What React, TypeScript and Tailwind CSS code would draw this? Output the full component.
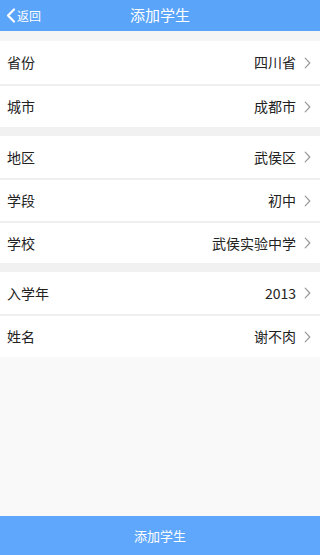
import React from "react";

type Row = { label: string; value: string; h: string };

const Chevron = () => (
  <svg width="7" height="12" viewBox="0 0 7 12" className="ml-[8px]">
    <path d="M1.2 1.2 L5.8 6 L1.2 10.8" fill="none" stroke="#999999" strokeWidth="1.2" strokeLinecap="round" strokeLinejoin="round" />
  </svg>
);

const RowItem = ({ r }: { r: Row }) => (
  <div className={`flex items-center justify-between bg-white pl-[7px] pr-[9px] ${r.h}`}>
    <span className="text-[14px] text-[#222222]">{r.label}</span>
    <div className="flex items-center">
      <span className="text-[14px] text-[#222222]">{r.value}</span>
      <Chevron />
    </div>
  </div>
);

const Sep = () => <div className="h-[2px] bg-[#efefef]" />;
const Gap = () => <div className="h-[9px] bg-[#f1f1f1]" />;

export default function App() {
  return (
    <div
      className="flex h-[555px] w-[320px] flex-col bg-[#f9f9f9]"
      style={{ fontFamily: '"Noto Sans CJK SC", "Noto Sans", sans-serif' }}
    >
      <div className="relative flex h-[31px] items-center justify-center bg-[#5aa4fa]">
        <div className="absolute left-[6px] top-0 flex h-[31px] items-center text-white">
          <svg width="10" height="15" viewBox="0 0 10 15">
            <path d="M8 1.5 L2 7.5 L8 13.5" fill="none" stroke="#fff" strokeWidth="2.2" strokeLinecap="round" strokeLinejoin="round" />
          </svg>
          <span className="ml-[1px] text-[12px]">返回</span>
        </div>
        <span className="text-[15px] text-white">添加学生</span>
      </div>
      <div className="h-[10px] bg-[#f5f5f5]" />
      <RowItem r={{ label: "省份", value: "四川省", h: "h-[43px]" }} />
      <Sep />
      <RowItem r={{ label: "城市", value: "成都市", h: "h-[41px]" }} />
      <Gap />
      <RowItem r={{ label: "地区", value: "武侯区", h: "h-[42px]" }} />
      <Sep />
      <RowItem r={{ label: "学段", value: "初中", h: "h-[41px]" }} />
      <Sep />
      <RowItem r={{ label: "学校", value: "武侯实验中学", h: "h-[40px]" }} />
      <Gap />
      <RowItem r={{ label: "入学年", value: "2013", h: "h-[42px]" }} />
      <Sep />
      <RowItem r={{ label: "姓名", value: "谢不肉", h: "h-[41px]" }} />
      <div className="flex-1" />
      <div className="flex h-[39px] items-center justify-center bg-[#5fa7fc]">
        <span className="text-[13px] text-white">添加学生</span>
      </div>
    </div>
  );
}
